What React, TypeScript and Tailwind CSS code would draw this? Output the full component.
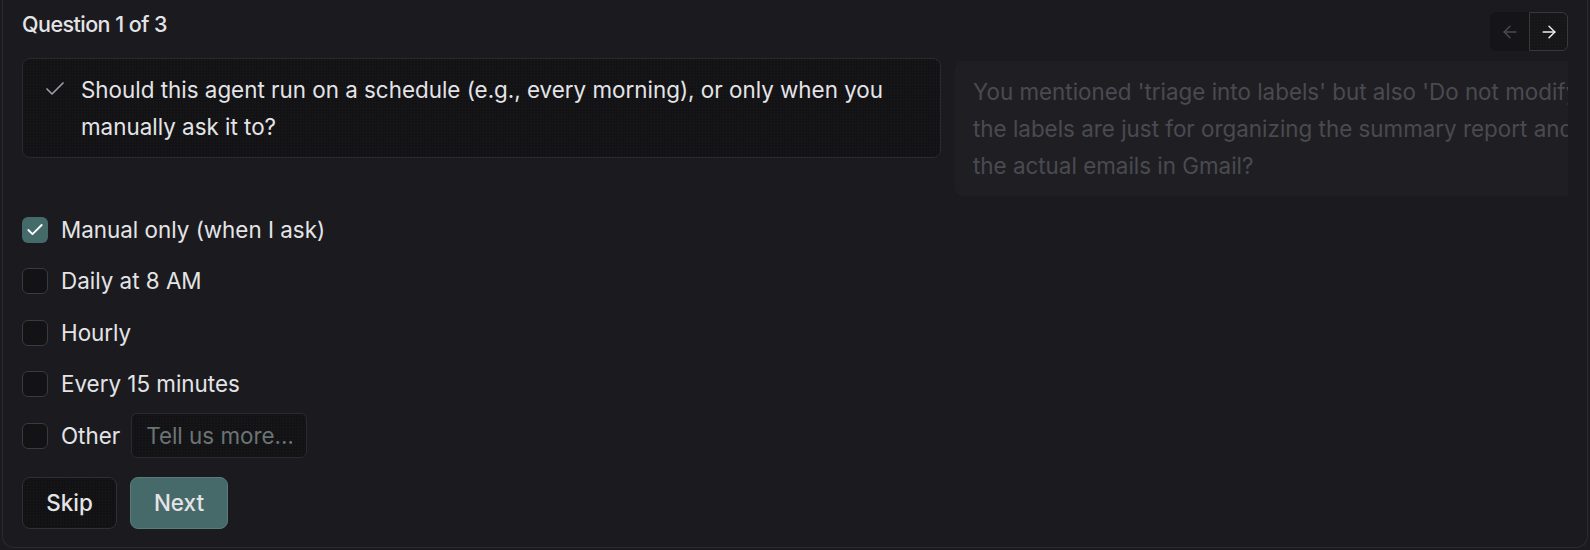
import { useState } from "react";
import { Check, ArrowLeft, ArrowRight } from "lucide-react";

const options = ["Manual only (when I ask)", "Daily at 8 AM", "Hourly", "Every 15 minutes"];

const dots = "bg-[radial-gradient(#ffffff0a_1px,transparent_1px)] bg-[length:3px_3px]";

export default function App() {
  const [selected, setSelected] = useState<string[]>(["Manual only (when I ask)"]);

  const toggle = (opt: string) =>
    setSelected((s) => (s.includes(opt) ? s.filter((o) => o !== opt) : [...s, opt]));

  return (
    <div className="h-[550px] bg-[#1b1b1f] px-[2px] pb-[2px] font-['Inter',sans-serif] text-[#e4e4e7]">
      <div className="h-full rounded-b-xl border-x border-b border-[#2b2b30] px-[19px] pt-[12px] overflow-hidden">
        {/* Header */}
        <div className="flex items-start justify-between">
          <h2 className="mt-[1px] text-[21.5px] font-medium tracking-tight leading-[22px]">Question 1 of 3</h2>
          <div className="flex h-[39px] rounded-md">
            <button className="flex w-[39px] items-center justify-center rounded-l-md bg-[#151518] text-[#4a4a50]">
              <ArrowLeft className="h-5 w-5" strokeWidth={1.75} />
            </button>
            <button className={`flex w-[39px] items-center justify-center rounded-r-md border border-[#38383d] bg-[#161619] text-[#ededed] ${dots}`}>
              <ArrowRight className="h-5 w-5" strokeWidth={1.75} />
            </button>
          </div>
        </div>

        {/* Question carousel */}
        <div className="mt-[7px] flex items-start gap-[14px] overflow-hidden">
          <div className={`flex w-[919px] shrink-0 items-start rounded-lg border border-[#2a2a2f] bg-[#131316] py-[12px] pl-[20px] pr-6 ${dots}`}>
            <Check className="mt-[6px] h-6 w-6 shrink-0 text-[#9b9ba0]" strokeWidth={1.75} />
            <p className="ml-[14px] text-[22.4px] leading-[37px]">
              Should this agent run on a schedule (e.g., every morning), or only when you manually ask it to?
            </p>
          </div>
          <div className="mt-[3px] w-[919px] shrink-0 rounded-lg bg-[#1f1f23] px-[18px] py-[12px] text-[22.4px] leading-[37px] text-[#4a4a50]">
            <p className="whitespace-nowrap">You mentioned 'triage into labels' but also 'Do not modify anything.' Should I assume</p>
            <p className="whitespace-nowrap">the labels are just for organizing the summary report and not applied to</p>
            <p className="whitespace-nowrap">the actual emails in Gmail?</p>
          </div>
        </div>

        {/* Options */}
        <div className="mt-[11px] flex flex-col gap-[6px]">
          {options.map((opt) => {
            const on = selected.includes(opt);
            return (
              <label key={opt} className="flex h-[45.5px] cursor-pointer items-center gap-[13px]" onClick={() => toggle(opt)}>
                <span
                  className={
                    on
                      ? "flex h-[26px] w-[26px] items-center justify-center rounded-[6px] bg-[#456a6a] text-white"
                      : "h-[26px] w-[26px] rounded-[6px] border border-[#3a3a3f] bg-[#131315]"
                  }
                >
                  {on && <Check className="h-5 w-5" strokeWidth={2.25} />}
                </span>
                <span className="text-[22.4px]">{opt}</span>
              </label>
            );
          })}
          <div className="flex h-[45.5px] items-center">
            <span className="h-[26px] w-[26px] rounded-[6px] border border-[#3a3a3f] bg-[#131315]" />
            <span className="ml-[13px] text-[22.4px]">Other</span>
            <input
              placeholder="Tell us more..."
              className={`ml-[11px] h-[45px] w-[176px] rounded-md border border-[#2a2a2f] bg-[#131316] px-[14px] text-[22.4px] outline-none placeholder:text-[#6b7474] ${dots}`}
            />
          </div>
        </div>

        {/* Actions */}
        <div className="mt-[18px] flex gap-[13px]">
          <button className={`h-[52px] w-[95px] rounded-lg border border-[#303035] bg-[#121214] text-[22.4px] font-medium ${dots}`}>
            Skip
          </button>
          <button className="h-[52px] w-[98px] rounded-lg border border-[#5a7b7b] bg-[#466a6a] text-[22.4px] font-medium">
            Next
          </button>
        </div>
      </div>
    </div>
  );
}
